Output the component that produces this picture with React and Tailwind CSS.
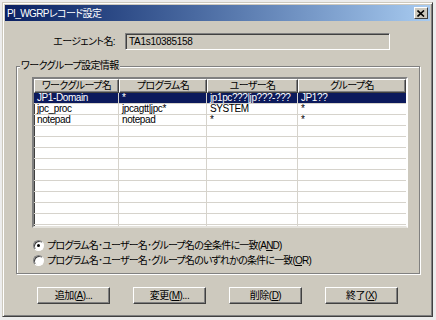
import React from "react";

const FONT = "font-['Liberation_Sans','Noto_Sans_CJK_JP',sans-serif] [font-feature-settings:'palt']";

const columns = [
  { label: "ワークグループ名", w: "w-[85px]" },
  { label: "プログラム名", w: "w-[88px]" },
  { label: "ユーザー名", w: "w-[91px]" },
  { label: "グループ名", w: "flex-1" },
];

const rows = [
  ["JP1-Domain", "*", "jp1pc???|jp???-???", "JP1??"],
  ["jpc_proc", "jpcagtt|jpc*", "SYSTEM", "*"],
  ["notepad", "notepad", "*", "*"],
];

const Radio = ({ checked, children }) => (
  <div className="flex items-center h-[15px]">
    <div className="relative w-[11px] h-[11px] rounded-full bg-white border border-t-[#808080] border-l-[#808080] border-r-white border-b-white shadow-[inset_1px_1px_0_#404040]">
      {checked && (
        <div className="absolute left-[3px] top-[3px] w-[3px] h-[3px] rounded-full bg-black" />
      )}
    </div>
    <span className="ml-[3px] text-[10px] tracking-[-0.8px] leading-[13px] text-black">{children}</span>
  </div>
);

const Button = ({ children }) => (
  <button className="w-[73px] h-[17px] bg-[#cdc9be] border border-t-white border-l-white border-r-[#404040] border-b-[#404040] shadow-[inset_-1px_-1px_0_#808080] text-[10px] tracking-[-0.5px] leading-[13px] text-black flex items-center justify-center">
    {children}
  </button>
);

export default function App() {
  return (
    <div className={`w-[436px] h-[320px] bg-[#ececec] pt-[2px] pl-[2px] ${FONT}`}>
      <div className="w-[431px] h-[315px] bg-[#cdc9be] border border-t-[#cdc9be] border-l-[#cdc9be] border-r-[#404040] border-b-[#404040] shadow-[inset_1px_1px_0_#fff,inset_-1px_-1px_0_#808080] p-[2px] flex flex-col">
        {/* title bar */}
        <div className="h-[16px] flex items-center justify-between bg-gradient-to-r from-[#0a1f62] to-[#a8cbf0] pl-[2px] pr-[2px]">
          <span className="text-white text-[10px] tracking-[-0.6px] leading-[13px]">PI_WGRPレコード設定</span>
          <div className="w-[14px] h-[12px] bg-[#cdc9be] border border-t-white border-l-white border-r-[#404040] border-b-[#404040] flex items-center justify-center">
            <svg width="8" height="7" viewBox="0 0 8 7">
              <path d="M0.5 0.5 L7 6.5 M7 0.5 L0.5 6.5" stroke="#000" strokeWidth="1.6" />
            </svg>
          </div>
        </div>

        {/* agent name */}
        <div className="mt-[12px] h-[17px] flex items-center">
          <div className="w-[110px] text-right text-[10px] tracking-[-0.6px] leading-[13px] text-black">エージェント名:</div>
          <div className="ml-[10px] w-[265px] h-[17px] border border-t-[#808080] border-l-[#808080] border-r-white border-b-white shadow-[inset_1px_1px_0_#404040] flex items-center pl-[3px] text-[10px] tracking-[-0.3px] text-black">
            TA1s10385158
          </div>
        </div>

        {/* group box */}
        <div className="relative mt-[16px] ml-[11px] w-[404px] h-[208px] border border-[#808080] shadow-[inset_1px_1px_0_#fff,1px_1px_0_#fff] pl-[15px] pt-[10px]">
          <span className="absolute -top-[8px] left-[3px] bg-[#cdc9be] px-[1px] text-[10px] tracking-[-0.6px] leading-[14px] text-black">
            ワークグループ設定情報
          </span>

          {/* list view */}
          <div className="w-[376px] h-[151px] bg-white border-2 border-t-[#808080] border-l-[#808080] border-r-white border-b-[#e4e2dc] shadow-[inset_1px_1px_0_#404040] overflow-hidden flex flex-col">
            <div className="flex h-[14px] shrink-0">
              {columns.map((c) => (
                <div
                  key={c.label}
                  className={`${c.w} h-[14px] bg-[#cdc9be] border border-t-white border-l-white border-r-[#404040] border-b-[#404040] shadow-[inset_-1px_-1px_0_#808080] flex items-center justify-center text-[10px] tracking-[-0.6px] leading-[12px] text-black`}
                >
                  {c.label}
                </div>
              ))}
            </div>
            {Array.from({ length: 13 }).map((_, i) => {
              const r = rows[i] || ["", "", "", ""];
              const sel = i === 0;
              return (
                <div
                  key={i}
                  className={`flex h-[11px] shrink-0 border-b border-[#d6d3cc] ${sel ? "bg-[#0c1a5c] text-white" : "text-black"}`}
                >
                  {columns.map((c, j) => (
                    <div
                      key={j}
                      className={`${c.w} h-[10px] ${j < 3 ? "border-r border-[#d6d3cc]" : ""} pl-[3px] text-[10px] tracking-[-0.4px] leading-[10px] whitespace-nowrap overflow-hidden`}
                    >
                      {r[j]}
                    </div>
                  ))}
                </div>
              );
            })}
          </div>

          {/* radios */}
          <div className="mt-[10px] ml-[1px] flex flex-col">
            <Radio checked>
              プログラム名･ユーザー名･グループ名の全条件に一致(A<span className="underline">N</span>D)
            </Radio>
            <Radio>
              プログラム名･ユーザー名･グループ名のいずれかの条件に一致(<span className="underline">O</span>R)
            </Radio>
          </div>
        </div>

        {/* buttons */}
        <div className="mt-[13px] flex ml-[32px] gap-[23px]">
          <Button>
            追加(<span className="underline">A</span>)...
          </Button>
          <Button>
            変更(<span className="underline">M</span>)...
          </Button>
          <Button>
            削除(<span className="underline">D</span>)
          </Button>
          <Button>
            終了(<span className="underline">X</span>)
          </Button>
        </div>
      </div>
    </div>
  );
}
